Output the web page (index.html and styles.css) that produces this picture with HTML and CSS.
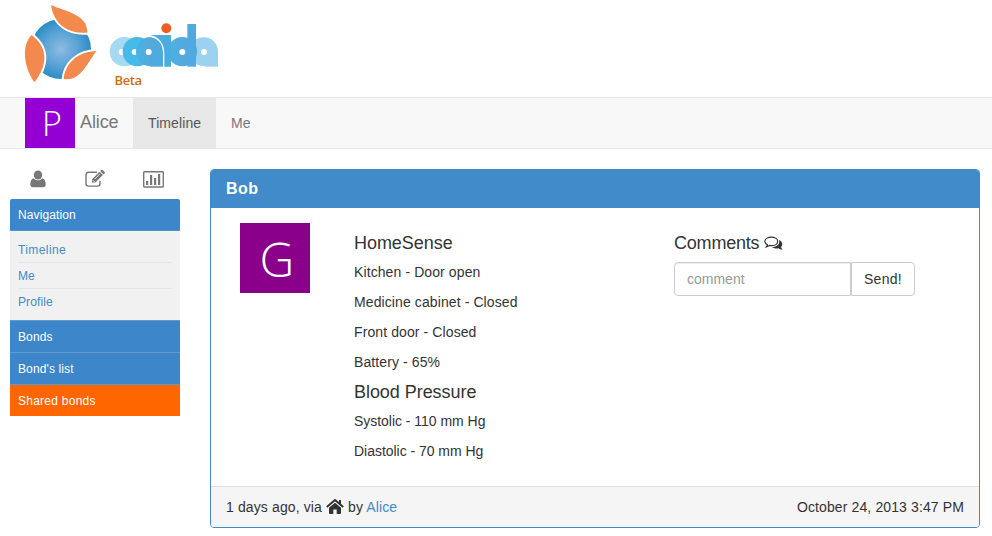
FILE: index.html
```html
<!DOCTYPE html>
<html lang="en">
<head>
<meta charset="utf-8">
<title>Timeline</title>
<link rel="stylesheet" href="styles.css">
</head>
<body>
<header class="brand">
  <svg class="logo" width="220" height="97" viewBox="0 0 220 97">
    <defs>
      <radialGradient id="globe"><stop offset="0" stop-color="#8fbbe3"/><stop offset=".55" stop-color="#5ba4d6"/><stop offset="1" stop-color="#2b8dc5"/></radialGradient>
      <linearGradient id="bowl"><stop offset="0" stop-color="#45b4e4"/><stop offset=".5" stop-color="#58a8dc"/><stop offset="1" stop-color="#4aabdf"/></linearGradient>
    </defs>
    <g transform="translate(10 0) scale(.33333)">
      <circle cx="153" cy="147" r="90" fill="url(#globe)"/>
      <g fill="#f3894d" stroke="#fff" stroke-width="12" stroke-linejoin="round" paint-order="stroke">
        <path d="M123 15C170 35 234 45 232 98C180 102 132 78 123 15Z"/>
        <path d="M65 105C34 135 40 200 73 247C109 202 120 147 65 105Z"/>
        <path d="M260 153C235 182 213 246 161 237C165 193 200 154 260 153Z"/>
      </g>
    </g>
    <g transform="translate(100 15) scale(.33333)">
      <circle cx="73" cy="110" r="44" fill="#a7d9f3"/><circle cx="65" cy="111" r="9" fill="#fff"/>
      <circle cx="112" cy="110" r="44" fill="#46bbe7"/><circle cx="104" cy="111" r="9" fill="#fff"/>
      <circle cx="311" cy="110" r="43" fill="#9bd2ef"/><rect x="314" y="108" width="40" height="47" fill="#9bd2ef"/>
      <circle cx="312" cy="111" r="9" fill="#fff"/>
      <circle cx="247" cy="110" r="44" fill="url(#bowl)"/><rect x="262" y="27" width="26" height="128" fill="#52a9df"/>
      <circle cx="247" cy="111" r="9" fill="#fff"/>
      <circle cx="152" cy="110" r="44" fill="url(#bowl)"/><rect x="151" y="105" width="38" height="50" fill="#4dabdf"/>
      <circle cx="146" cy="111" r="9" fill="#fff"/>
      <path d="M149 60H213V155H192V112C190 79 174 64 149 60Z" fill="#4aacdf"/>
      <path d="M144 63C175 66 191 86 191 116V155" fill="none" stroke="#fff" stroke-width="4"/>
      <circle cx="199" cy="40" r="15" fill="#f05b23"/>
    </g>
    <text x="114.500" y="84.500" textLength="27.500" class="beta">Beta</text>
  </svg>
</header>
<nav class="navbar">
  <div class="avatar avatar-me">P</div>
  <a class="nav-name">Alice</a>
  <a class="nav-link active">Timeline</a>
  <a class="nav-link">Me</a>
</nav>
<div class="columns">
  <aside class="sidebar">
    <div class="tools">
      <svg width="16" height="18" viewBox="0 0 16 18"><ellipse cx="8" cy="5" rx="4.200" ry="4.500" fill="#777"/><path d="M3.600 8.200C1.500 8.700.3 11 .3 14.500.3 16.200 1.300 17.300 3 17.300h10c1.700 0 2.700-1.100 2.700-2.800 0-3.500-1.200-5.800-3.300-6.300-2.400 2.700-6.400 2.700-8.800 0Z" fill="#777"/></svg>
      <svg width="20" height="18" viewBox="0 0 20 18"><path d="M12 2.200H4A3 3 0 0 0 1 5v8.500a2.600 2.600 0 0 0 2.600 2.600h8.800a2.600 2.600 0 0 0 2.600-2.600v-2.700" fill="none" stroke="#777" stroke-width="1.400"/><path d="m7 9.200 7.500-7.500 3.400 3.400-7.500 7.500H7ZM15.200 1l1-1q.7-.5 1.400.1l2 2q.6.7 0 1.400l-1 1Z" fill="#777"/><path d="m9.800 9 5-5M7.800 10.200l1.700 1.700" stroke="#fff" stroke-width=".8"/></svg>
      <svg width="21" height="17" viewBox="0 0 21 17"><rect x=".7" y=".7" width="19.600" height="15.300" rx=".8" fill="none" stroke="#777" stroke-width="1.400"/><path d="M3 10h2.200v4H3zM7 4h2.200v10H7zM11 7h2.200v7H11zM15 3h2.200v11H15z" fill="#777"/></svg>
    </div>
    <div class="side-head first">Navigation</div>
    <ul class="side-links"><li>Timeline</li><li>Me</li><li>Profile</li></ul>
    <div class="side-head">Bonds</div>
    <div class="side-head">Bond's list</div>
    <div class="side-head shared">Shared bonds</div>
  </aside>
  <main class="panel">
    <h3 class="panel-title">Bob</h3>
    <div class="panel-body">
      <div class="avatar avatar-bond">G</div>
      <section class="readings">
        <h4>HomeSense</h4>
        <p>Kitchen - Door open</p>
        <p>Medicine cabinet - Closed</p>
        <p>Front door - Closed</p>
        <p>Battery - 65%</p>
        <h4>Blood Pressure</h4>
        <p class="tight">Systolic - 110 mm Hg</p>
        <p class="tight">Diastolic - 70 mm Hg</p>
      </section>
      <section class="comments">
        <h4>Comments <svg width="19" height="15" viewBox="0 0 19 15"><path d="M13 9.800c2-1.500 2.800-3.800 1.800-6 3.700 1.700 4.500 5 2.200 7.300.2 1 .8 1.800 1.500 2.400-1.800.1-2.900-.4-3.900-1.200-2.700.5-5 0-6.600-1.300 2 0 3.800-.4 5-1.200Z" fill="#333"/><path d="M7.300 1.200c3.700 0 6.400 1.800 6.400 4.200S11 9.600 7.300 9.600l-1.600-.2c-1 .8-2 1.200-3.400 1.400.7-.7 1.100-1.300 1.200-2.100C1.800 7.900.8 6.700.8 5.400.8 3 3.600 1.200 7.300 1.200Z" fill="#fff" stroke="#333" stroke-width="1.200"/></svg></h4>
        <div class="input-group"><input type="text" placeholder="comment"><button>Send!</button></div>
      </section>
    </div>
    <footer class="panel-footer">
      <span>1 days ago, via <svg class="home" width="18" height="15" viewBox="0 0 18 15"><path d="M9 3.700 15 8.800V14a1 1 0 0 1-1 1h-3.300v-4.500H7.300V15H4a1 1 0 0 1-1-1V8.800Z" fill="#333"/><path d="m.8 7.900L9 1l8.200 6.900M14 1v4" fill="none" stroke="#333" stroke-width="2"/></svg> by <a>Alice</a></span>
      <time>October 24, 2013 3:47 PM</time>
    </footer>
  </main>
</div>
</body>
</html>
```
FILE: styles.css
```css
* { box-sizing: border-box; }
body { margin: 0; height: 536px; overflow: hidden; background: #fff; color: #333; font: 14px/20px "Liberation Sans", Arial, sans-serif; }
svg { display: block; }
.brand { height: 97px; }
.beta { font: 600 13px "Open Sans", sans-serif; fill: #cf6d13; }
.navbar { display: flex; height: 52px; padding-left: 25px; background: #f8f8f8; border: solid #e7e7e7; border-width: 1px 0; }
.avatar { color: #fff; font-family: "Open Sans", sans-serif; font-weight: 300; text-align: center; }
.avatar-me { width: 50px; height: 50px; background: #9400d3; font-size: 34px; line-height: 50px; padding-left: 4px; }
.nav-name { width: 58px; padding-left: 5px; color: #777; font-size: 18px; line-height: 48px; letter-spacing: -.1px; }
.nav-link { padding: 0 15px; color: #777; line-height: 50px; }
.nav-link.active { width: 83px; background: #e7e7e7; color: #555; letter-spacing: .1px; }
.columns { display: flex; align-items: flex-start; gap: 30px; padding: 20px 12px 0 10px; }
.sidebar { width: 170px; font-size: 12px; letter-spacing: .12px; }
.side-links li:first-child { letter-spacing: .4px; }
.tools { display: flex; justify-content: space-between; align-items: center; height: 30px; padding: 0 16px 10px 20px; }
.side-head { height: 32px; padding: 0 8px; border-top: 1px solid #5e9bd0; background: #3c86c9; color: #fff; line-height: 32px; }
.side-head.first { border-top: 0; border-bottom: 1px solid #5094cd; border-radius: 2px 2px 0 0; }
.side-head.shared { background: #f60; border-top-color: #5e9bd0; letter-spacing: .25px; }
.side-links { margin: 0; padding: 6px 8px 5px; height: 89px; list-style: none; background: #f1f1f1; color: #428bca; }
.side-links li { height: 26px; line-height: 26px; border-bottom: 1px solid #e5e5e5; }
.side-links li:last-child { border: 0; }
.panel { width: 770px; height: 359px; display: flex; flex-direction: column; border: 1px solid #428bca; border-radius: 4px; overflow: hidden; }
.panel-title { margin: 0; height: 38px; padding-left: 15px; background: #428bca; color: #fff; font-size: 16px; line-height: 37px; letter-spacing: .4px; }
.panel-body { display: flex; flex: 1; padding: 15px 29px; border-top: 1px solid #428bca; letter-spacing: .1px; }
.avatar-bond { width: 70px; height: 70px; background: #8b008b; font-size: 48px; line-height: 71px; padding-left: 4px; }
.readings { width: 320px; margin-left: 44px; }
h4 { margin: 10px 0 9px; font-size: 18px; line-height: 20px; font-weight: 400; letter-spacing: -.05px; }
p { margin: 0 0 10px; }
.tight { letter-spacing: -.03px; }
.comments h4 { display: flex; align-items: center; gap: 5px; letter-spacing: -.2px; }
.input-group { display: flex; width: 241px; height: 34px; }
input, button { font: inherit; background: #fff; border: 1px solid #ccc; color: #333; }
input { width: 177px; padding: 6px 12px; border-radius: 4px 0 0 4px; box-shadow: inset 0 1px 1px rgba(0,0,0,.075); }
input::placeholder { color: #999; opacity: 1; }
button { width: 64px; padding: 0; border-radius: 0 4px 4px 0; letter-spacing: .3px; }
.panel-footer { display: flex; justify-content: space-between; height: 42px; padding: 0 15px; background: #f5f5f5; border-top: 1px solid #ddd; line-height: 40px; letter-spacing: .12px; }
.panel-footer a { color: #428bca; }
.home { display: inline-block; vertical-align: -2px; }
```
